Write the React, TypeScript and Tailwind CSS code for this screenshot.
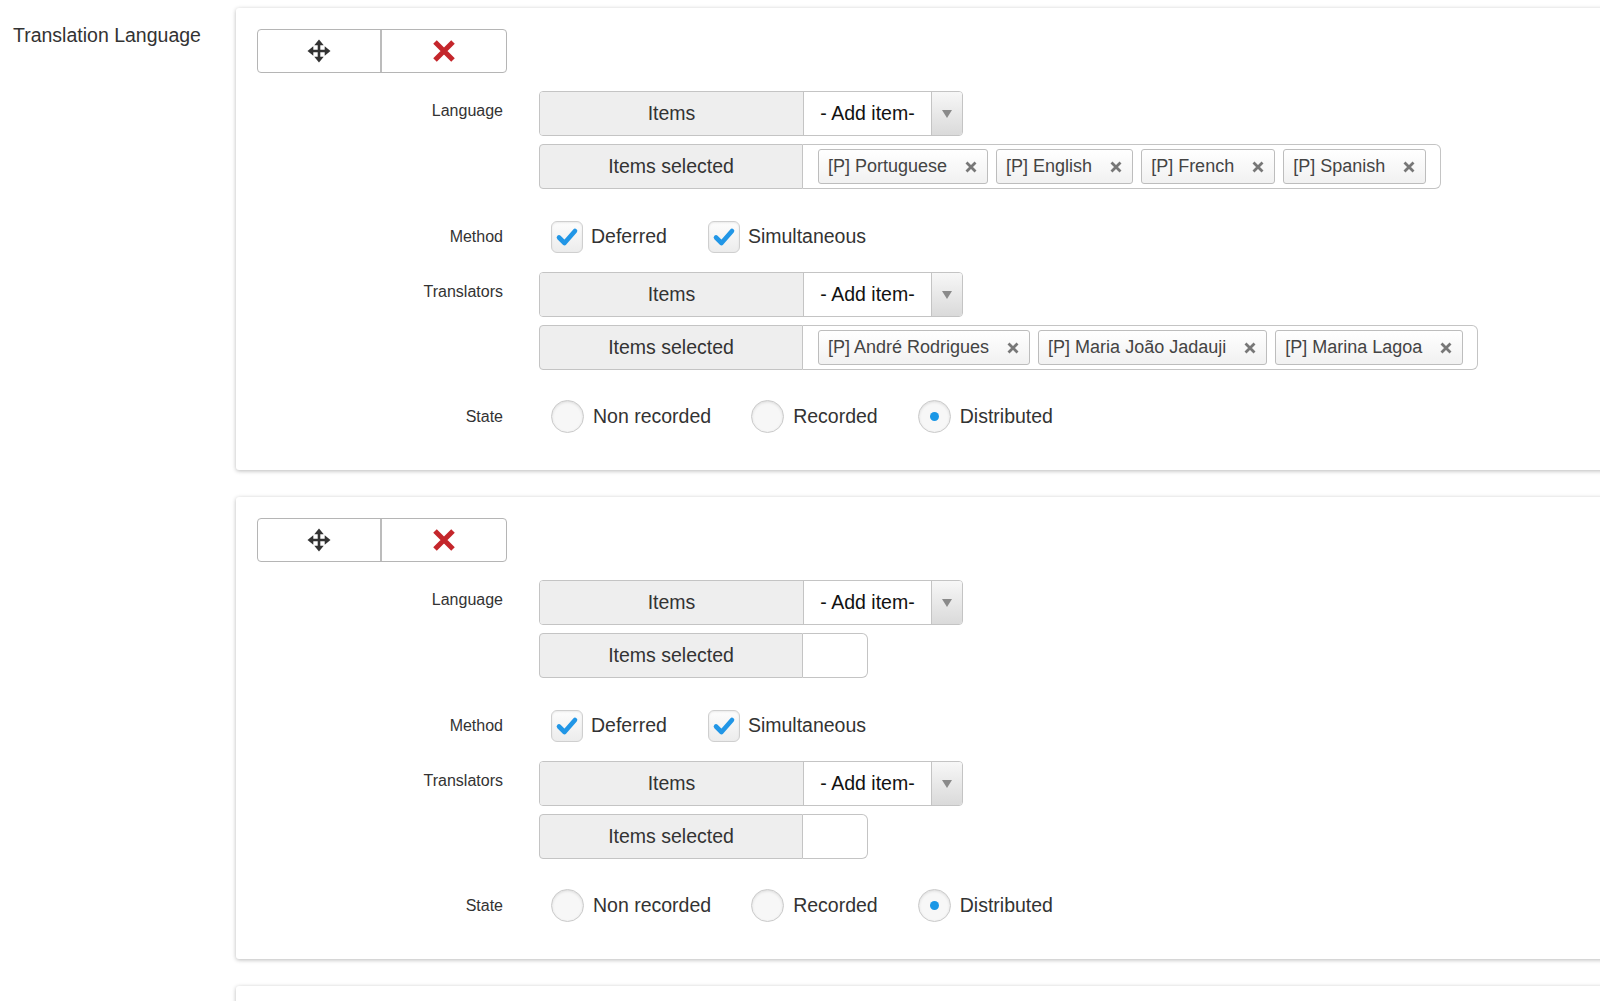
import React from 'react';

const LANGUAGES = ['[P] Portuguese', '[P] English', '[P] French', '[P] Spanish'];
const TRANSLATORS = ['[P] André Rodrigues', '[P] Maria João Jadauji', '[P] Marina Lagoa'];

function MoveIcon() {
  return (
    <svg width="24" height="24" viewBox="0 0 24 24">
      <path d="M12 5v14M5 12h14" stroke="#333" strokeWidth="2.6" />
      <polygon points="12,0.5 7.3,6.3 16.7,6.3" fill="#333" />
      <polygon points="12,23.5 7.3,17.7 16.7,17.7" fill="#333" />
      <polygon points="0.5,12 6.3,7.3 6.3,16.7" fill="#333" />
      <polygon points="23.5,12 17.7,7.3 17.7,16.7" fill="#333" />
    </svg>
  );
}

function RemoveIcon() {
  return (
    <svg width="26" height="26" viewBox="0 0 26 26">
      <path d="M4 4L22 22M22 4L4 22" stroke="#c4262b" strokeWidth="5" />
    </svg>
  );
}

function SmallX() {
  return (
    <svg width="12" height="12" viewBox="0 0 12 12">
      <path d="M1.5 1.5L10.5 10.5M10.5 1.5L1.5 10.5" stroke="#777" strokeWidth="2.8" />
    </svg>
  );
}

function ButtonBar() {
  return (
    <div className="flex w-[250px] h-[44px] rounded-[4px] border border-[#b5b5b5] bg-white">
      <div className="w-[124px] flex items-center justify-center border-r-2 border-[#bcbcbc]">
        <MoveIcon />
      </div>
      <div className="flex-1 flex items-center justify-center">
        <RemoveIcon />
      </div>
    </div>
  );
}

function AddRow() {
  return (
    <div className="flex h-[45px] w-[424px] rounded-[4px] border border-[#c4c4c4] overflow-hidden text-[19.5px]">
      <div className="w-[263px] bg-[#eeeeee] flex items-center justify-center text-[#333]">Items</div>
      <div className="w-[128px] bg-white border-l border-[#c4c4c4] flex items-center justify-center text-[#111]">- Add item-</div>
      <div className="flex-1 border-l border-[#c4c4c4] bg-linear-to-b from-[#f7f7f7] to-[#dadada] flex items-center justify-center">
        <svg width="10" height="8" viewBox="0 0 10 8">
          <polygon points="0,0 10,0 5,8" fill="#8a8a8a" />
        </svg>
      </div>
    </div>
  );
}

function Chip({ label }: { label: string }) {
  return (
    <div className="flex items-center h-[35px] rounded-[3px] border border-[#bdbdbd] bg-linear-to-b from-white to-[#f1f1f1] pl-[9px] pr-[10px] text-[18px] text-[#444]">
      <span>{label}</span>
      <span className="ml-[18px] flex items-center">
        <SmallX />
      </span>
    </div>
  );
}

function SelectedRow({ items }: { items: string[] }) {
  return (
    <div className="flex h-[45px]">
      <div className="w-[264px] rounded-l-[4px] border border-[#c4c4c4] bg-[#eeeeee] flex items-center justify-center text-[19.5px] text-[#333]">
        Items selected
      </div>
      <div className="flex items-center gap-[8px] min-w-[65px] rounded-r-[6px] border border-l-0 border-[#c4c4c4] bg-white pl-[15px] pr-[14px]">
        {items.map((item) => (
          <Chip key={item} label={item} />
        ))}
      </div>
    </div>
  );
}

function Checkbox({ label }: { label: string }) {
  return (
    <div className="flex items-center gap-[8px] mr-[41px]">
      <div className="w-[32px] h-[32px] rounded-[6px] border border-[#cfcfcf] bg-linear-to-b from-[#fdfdfd] to-[#ececec] shadow-[inset_0_1px_2px_rgba(0,0,0,0.08)] flex items-center justify-center">
        <svg width="26" height="26" viewBox="0 0 26 26">
          <path d="M5 13.5L10.5 19L21 7" fill="none" stroke="#2196e6" strokeWidth="4.6" strokeLinecap="round" strokeLinejoin="round" />
        </svg>
      </div>
      <span className="text-[19.5px] text-[#333]">{label}</span>
    </div>
  );
}

function Radio({ label, checked }: { label: string; checked?: boolean }) {
  return (
    <div className="flex items-center gap-[9px] mr-[40px]">
      <div className="w-[33px] h-[33px] rounded-full border border-[#cacaca] bg-[#f7f7f7] shadow-[inset_0_1px_3px_rgba(0,0,0,0.12)] flex items-center justify-center">
        {checked && <div className="w-[9px] h-[9px] rounded-full bg-[#1a97e6]" />}
      </div>
      <span className="text-[19.5px] text-[#333]">{label}</span>
    </div>
  );
}

function FieldLabel({ children, top }: { children: React.ReactNode; top?: boolean }) {
  return (
    <div className={top ? 'w-[246px] shrink-0 text-right text-[16px] leading-[20px] pt-[10px] text-[#333]' : 'w-[246px] shrink-0 text-right text-[16px] leading-[20px] text-[#333]'}>
      {children}
    </div>
  );
}

function TranslationCard({ languages, translators }: { languages: string[]; translators: string[] }) {
  return (
    <div className="bg-white rounded-[3px] shadow-[0_1px_4px_rgba(0,0,0,0.28)] pt-[21px] pl-[21px] pb-[37px]">
      <ButtonBar />

      <div className="flex mt-[18px]">
        <FieldLabel top>Language</FieldLabel>
        <div className="ml-[36px] flex flex-col gap-[8px]">
          <AddRow />
          <SelectedRow items={languages} />
        </div>
      </div>

      <div className="flex items-center h-[32px] mt-[32px]">
        <FieldLabel>Method</FieldLabel>
        <div className="ml-[48px] flex items-center">
          <Checkbox label="Deferred" />
          <Checkbox label="Simultaneous" />
        </div>
      </div>

      <div className="flex mt-[19px]">
        <FieldLabel top>Translators</FieldLabel>
        <div className="ml-[36px] flex flex-col gap-[8px]">
          <AddRow />
          <SelectedRow items={translators} />
        </div>
      </div>

      <div className="flex items-center h-[33px] mt-[30px]">
        <FieldLabel>State</FieldLabel>
        <div className="ml-[48px] flex items-center">
          <Radio label="Non recorded" />
          <Radio label="Recorded" />
          <Radio label="Distributed" checked />
        </div>
      </div>
    </div>
  );
}

export default function App() {
  return (
    <div className="w-[1600px] h-[1001px] overflow-hidden bg-white font-['Liberation_Sans',Arial,sans-serif] text-[#333]">
      <div className="flex">
        <div className="w-[236px] shrink-0 pl-[13px] pt-[23px]">
          <div className="text-[19.5px] leading-[24px] text-[#333]">Translation Language</div>
        </div>
        <div className="w-[1400px] shrink-0 pt-[8px] flex flex-col gap-[27px]">
          <TranslationCard languages={LANGUAGES} translators={TRANSLATORS} />
          <TranslationCard languages={[]} translators={[]} />
          {/* next entry, only its top edge is on screen */}
          <div className="h-[462px] bg-white rounded-[3px] shadow-[0_1px_4px_rgba(0,0,0,0.28)]" />
        </div>
      </div>
    </div>
  );
}
